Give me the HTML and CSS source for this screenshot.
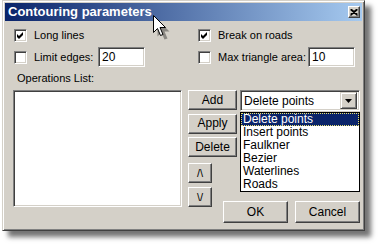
FILE: index.html
```html
<!DOCTYPE html>
<html>
<head>
<meta charset="utf-8">
<link rel="stylesheet" href="styles.css">
</head>
<body>
<div class="window">
  <div class="titlebar">
    <span class="title">Contouring parameters</span>
    <span class="close"><svg width="8" height="7" viewBox="0 0 8 7"><path d="M0.5 0.5 L7.5 6.5 M7.5 0.5 L0.5 6.5 M1.5 0.5 L7.5 5.5 M6.5 0.5 L0.5 5.5" stroke="#000" stroke-width="1.2" fill="none"/></svg></span>
  </div>
  <div class="body">
    <div class="opts">
      <div class="opt"><span class="cb"><svg class="tick" width="7" height="7" viewBox="0 0 7 7"><path d="M0 2 L2 4 L6 0 L6 3 L2 7 L0 5 Z" fill="#000"/></svg></span><span class="lbl">Long lines</span></div>
      <div class="opt"><span class="cb"><svg class="tick" width="7" height="7" viewBox="0 0 7 7"><path d="M0 2 L2 4 L6 0 L6 3 L2 7 L0 5 Z" fill="#000"/></svg></span><span class="lbl">Break on roads</span></div>
      <div class="opt"><span class="cb"></span><span class="lbl">Limit edges:</span><span class="field">20</span></div>
      <div class="opt"><span class="cb"></span><span class="lbl">Max triangle area:</span><span class="field">10</span></div>
    </div>
    <div class="oplabel">Operations List:</div>
    <div class="main">
      <div class="listbox"></div>
      <div class="side">
        <div class="top">
          <div class="btncol">
            <div class="btn">Add</div>
            <div class="btn">Apply</div>
            <div class="btn">Delete</div>
          </div>
          <div class="combo">
            <div class="combobox">
              <span class="cval">Delete points</span>
              <span class="cbtn"><svg width="7" height="4" viewBox="0 0 7 4"><path d="M0 0 H7 L3.5 4 Z" fill="#000"/></svg></span>
            </div>
            <ul class="droplist">
              <li class="sel">Delete points</li>
              <li>Insert points</li>
              <li>Faulkner</li>
              <li>Bezier</li>
              <li>Waterlines</li>
              <li>Roads</li>
            </ul>
          </div>
        </div>
        <div class="bottom">
          <div class="arrows">
            <div class="btn small">/\</div>
            <div class="btn small">\/</div>
          </div>
          <div class="okrow">
            <div class="btn wide">OK</div>
            <div class="btn wide">Cancel</div>
          </div>
        </div>
      </div>
    </div>
  </div>
</div>
<svg class="cursor" width="20" height="26" viewBox="0 0 20 26">
  <path d="M3.5 3.5 L3.5 20.5 L7.5 16.5 L10.5 23.5 L13.5 22.5 L10.5 15.5 L15.5 15.5 Z" fill="rgba(0,0,0,0.35)" transform="translate(2,2)"/>
  <path d="M1.5 1.5 L1.5 18.5 L5.5 14.5 L8.5 21.5 L11 20.5 L8 13.5 L13.5 13.5 Z" fill="#fff" stroke="#000" stroke-width="1" stroke-linejoin="miter"/>
</svg>
</body>
</html>
```
FILE: styles.css
```css
* { box-sizing: border-box; }
html, body { margin: 0; padding: 0; background: #fff; }
body {
  font-family: "Liberation Sans", Arial, sans-serif;
  font-size: 11px;
  color: #000;
  width: 380px;
  height: 246px;
  overflow: hidden;
  position: relative;
}
.window {
  position: relative;
  margin-left: 2px;
  width: 363px;
  height: 231px;
  background: #d4d0c8;
  border: 1px solid;
  border-color: #d4d0c8 #404040 #404040 #d4d0c8;
  box-shadow: inset 1px 1px 0 #fff, inset -1px -1px 0 #808080, 6px 6px 5px rgba(0,0,0,0.55);
  display: flex;
  flex-direction: column;
}
.titlebar {
  margin: 2px 2px 0 2px;
  height: 18px;
  background: linear-gradient(to right, #0a246a, #a6caf0);
  display: flex;
  align-items: center;
  justify-content: space-between;
  padding: 0 2px 0 3px;
}
.title {
  color: #fff;
  font-weight: bold;
  font-size: 13px;
  line-height: 18px;
}
.close {
  width: 12px;
  height: 12px;
  background: #d4d0c8;
  border: 1px solid;
  border-color: #fff #404040 #404040 #fff;
  box-shadow: inset -1px -1px 0 #808080;
  display: flex;
  align-items: center;
  justify-content: center;
}
.close svg { display: block; margin-left: -1px; }
.body {
  flex: 1;
  display: flex;
  flex-direction: column;
  padding: 6px 4px 7px 6px;
}
.opts {
  display: grid;
  grid-template-columns: 131px 157px;
  grid-template-rows: 16px 20px;
  column-gap: 53px;
  row-gap: 4px;
  padding-left: 5px;
}
.opt {
  display: flex;
  align-items: center;
}
.cb {
  width: 13px;
  height: 13px;
  background: #fff;
  border: 1px solid;
  border-color: #808080 #fff #fff #808080;
  box-shadow: inset 1px 1px 0 #404040, inset -1px -1px 0 #d4d0c8;
  display: flex;
  align-items: center;
  justify-content: center;
  flex: none;
}
.tick { display: block; }
.lbl {
  margin-left: 7px;
  white-space: nowrap;
}
.field {
  margin-left: auto;
  width: 47px;
  height: 20px;
  background: #fff;
  border: 1px solid;
  border-color: #808080 #fff #fff #808080;
  box-shadow: inset 1px 1px 0 #404040, inset -1px -1px 0 #d4d0c8;
  padding: 0 3px;
  line-height: 18px;
  font-size: 12px;
}
.oplabel {
  margin-top: 5px;
  padding-left: 8px;
  line-height: 13px;
  height: 13px;
}
.main {
  margin-top: 5px;
  flex: 1;
  display: flex;
  gap: 6px;
  padding-left: 4px;
}
.listbox {
  width: 169px;
  height: 117px;
  background: #fff;
  border: 1px solid;
  border-color: #808080 #fff #fff #808080;
  box-shadow: inset 1px 1px 0 #404040, inset -1px -1px 0 #d4d0c8;
  flex: none;
}
.side {
  width: 174px;
  display: flex;
  flex-direction: column;
}
.top {
  display: flex;
  justify-content: space-between;
}
.btncol {
  display: flex;
  flex-direction: column;
  gap: 3.5px;
  width: 49px;
}
.btn {
  height: 20px;
  background: #d4d0c8;
  border: 1px solid;
  border-color: #fff #404040 #404040 #fff;
  box-shadow: inset -1px -1px 0 #808080;
  display: flex;
  align-items: center;
  justify-content: center;
  font-size: 12px;
  padding-bottom: 1px;
}
.combo {
  width: 120px;
  position: relative;
}
.combobox {
  height: 21px;
  background: #fff;
  border: 1px solid;
  border-color: #808080 #fff #fff #808080;
  box-shadow: inset 1px 1px 0 #404040, inset -1px -1px 0 #d4d0c8;
  display: flex;
  align-items: center;
  padding: 2px 2px 2px 3px;
  font-size: 12px;
}
.cval { flex: 1; }
.cbtn {
  width: 17px;
  height: 17px;
  background: #d4d0c8;
  border: 1px solid;
  border-color: #d4d0c8 #404040 #404040 #d4d0c8;
  box-shadow: inset 1px 1px 0 #fff, inset -1px -1px 0 #808080;
  display: flex;
  align-items: center;
  justify-content: center;
}
.cbtn svg { display: block; }
.droplist {
  position: absolute;
  left: 0;
  top: 22px;
  width: 120px;
  margin: 0;
  padding: 0;
  list-style: none;
  background: #fff;
  border: 1px solid #000;
  font-size: 12px;
}
.droplist li {
  height: 13px;
  line-height: 12px;
  padding-left: 2px;
  white-space: nowrap;
}
.droplist li.sel {
  background: #0a246a;
  color: #fff;
  outline: 1px dotted #e8e070;
  outline-offset: -1px;
}
.bottom {
  flex: 1;
  display: flex;
  justify-content: space-between;
  margin-top: 6px;
}
.arrows {
  display: flex;
  flex-direction: column;
  gap: 4px;
  width: 24px;
  align-self: flex-start;
}
.small { font-size: 11px; }
.okrow {
  align-self: flex-end;
  display: flex;
  gap: 7px;
}
.wide {
  width: 65px;
  height: 22px;
}
.cursor {
  position: absolute;
  left: 152px;
  top: 14px;
}
```
